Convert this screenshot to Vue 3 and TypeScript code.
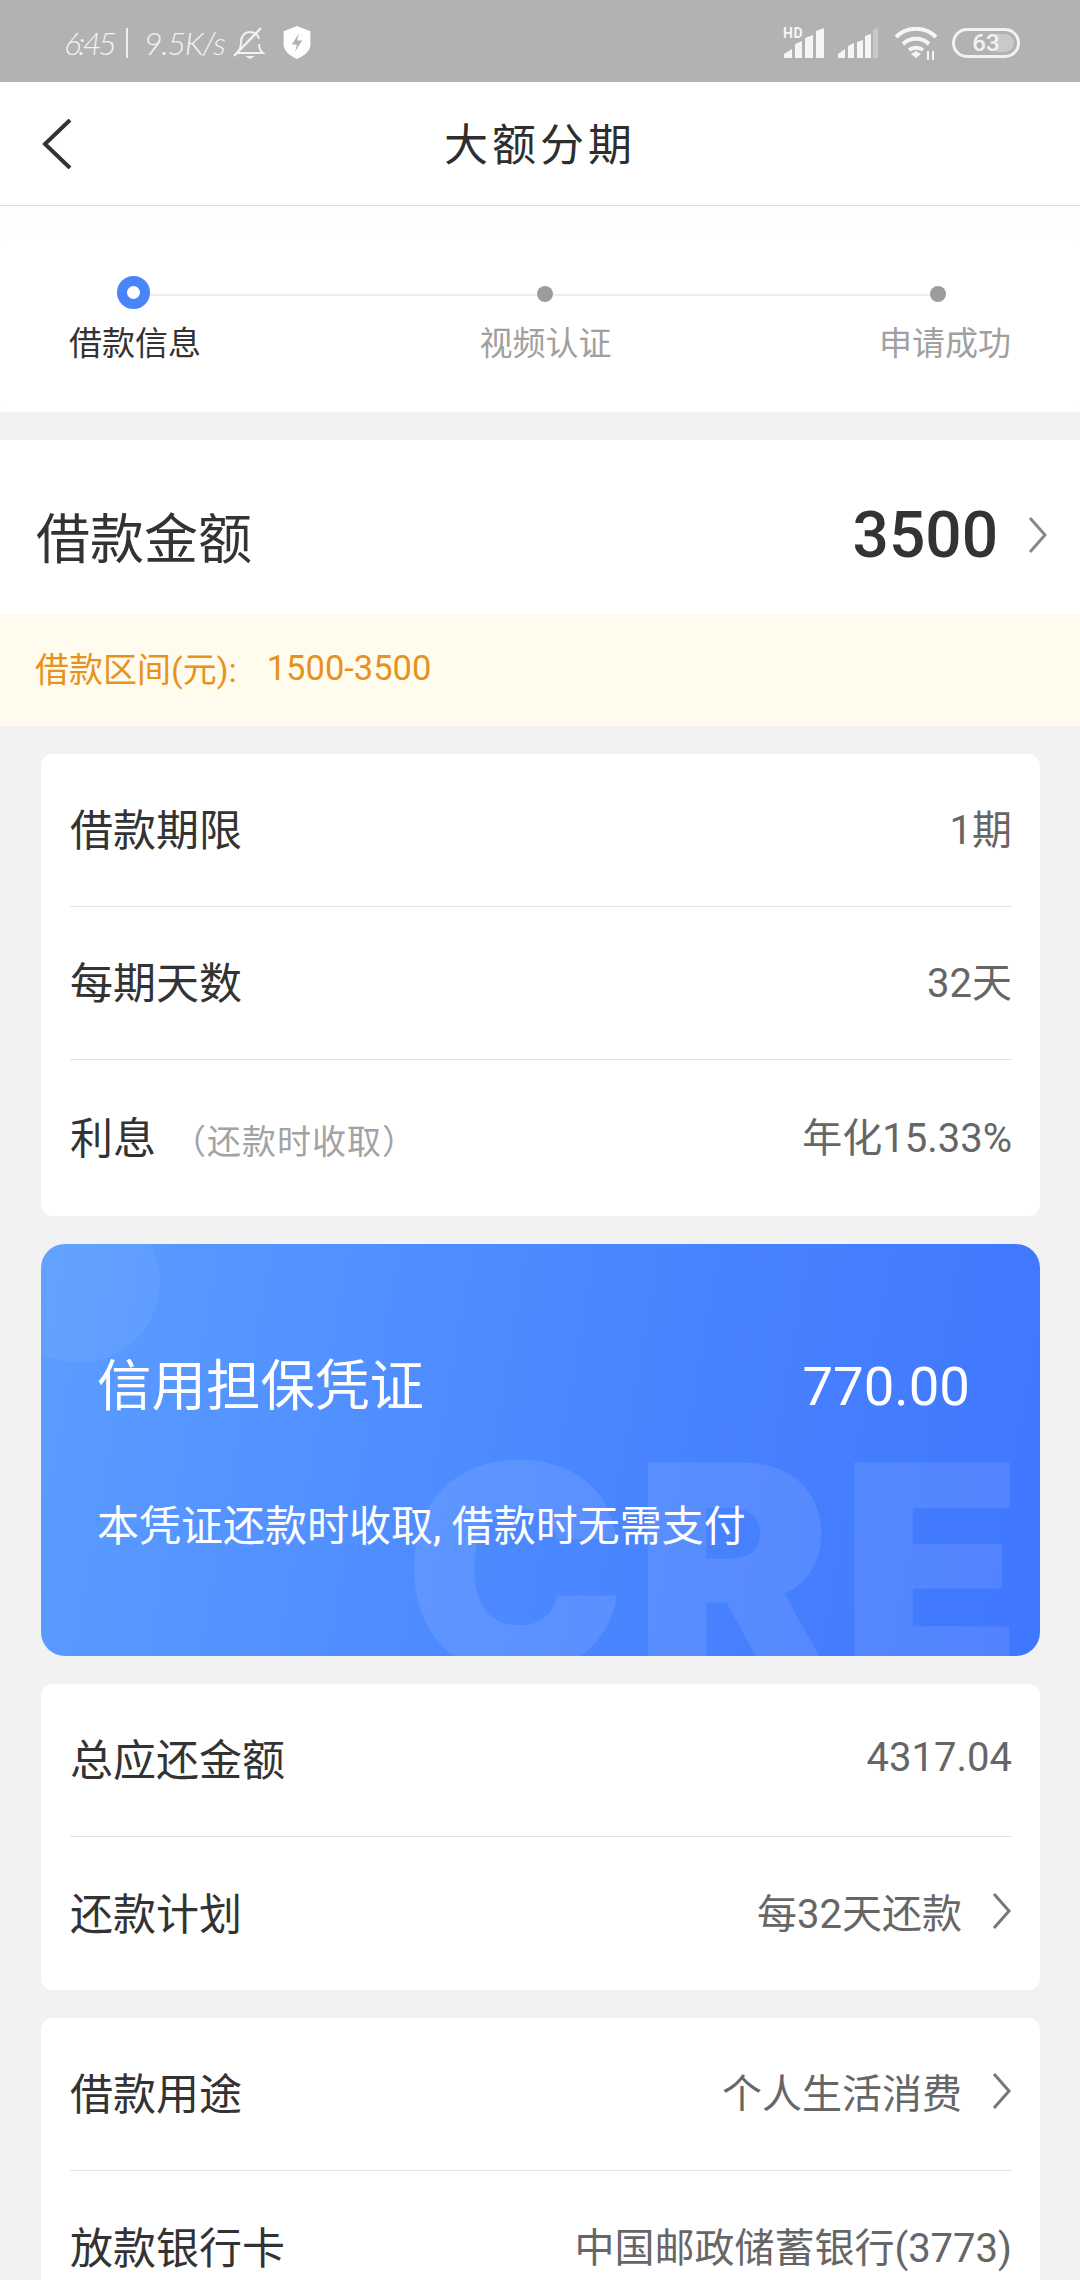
<template>
  <div class="page">
    <div class="status-bar">
      <span class="time">6:45</span>
      <span class="sep"></span>
      <span class="speed">9.5K/s</span>
      <svg class="bell" viewBox="0 0 32 34" fill="none" stroke="#f2f2f2" stroke-width="2">
        <path d="M4 27c3-3 4-6 4-11 0-6 4-10 9-10s8 3 9 7M26 18c0 4 1 7 4 9H4" />
        <path d="M1 30 28 2" stroke-width="2.4" />
        <path d="M12 30h10l-5 3z" fill="#f2f2f2" stroke="none" />
      </svg>
      <svg class="shield" viewBox="0 0 28 32">
        <path d="M14 0 27 5v13c0 6-6 11-13 14C7 29 1 24 1 18V5z" fill="#fff" />
        <path d="M16 7 9 18h5l-2 7 7-11h-5z" fill="#b2b2b2" />
      </svg>
      <div class="status-right">
        <div class="signal">
          <span class="hd">HD</span>
          <svg viewBox="0 0 40 30" class="bars">
            <path d="M0 30v-4l8-5v9zM11 30V16l7-3v17zM21 30V10l8-3v23zM32 30V3l8-3v30z" fill="#f5f5f5" />
          </svg>
        </div>
        <svg viewBox="0 0 40 30" class="bars second">
          <path d="M0 30v-4l7-5v9zM10 30V18l6-3v15zM19 30V14l6-2v18zM27 30V8l6-2v24z" fill="#f5f5f5" />
          <path d="M35 30V2l5-2v30z" fill="#c8c8c8" />
        </svg>
        <svg class="wifi" viewBox="0 0 44 34" fill="none" stroke="#f5f5f5" stroke-width="4">
          <path d="M2 10C13-1 31-1 42 10" />
          <path d="M9 17c7-7 19-7 26 0" />
          <path d="M15 23c4-3 10-3 14 0" />
          <path d="m17 27 5-3 5 3-5 4z" fill="#f5f5f5" stroke="none" />
          <path d="M34 24v9M39 24v9" stroke-width="2" />
        </svg>
        <div class="battery">
          <span class="battery-fill"></span>
          <span class="battery-num">63</span>
        </div>
      </div>
    </div>

    <header class="nav">
      <svg class="back" viewBox="0 0 30 50" fill="none" stroke="#333" stroke-width="4">
        <path d="M28 1 3 25l25 24" />
      </svg>
      <span class="nav-title">大额分期</span>
    </header>

    <div class="top-strip">
      <section class="steps">
        <div class="track">
          <span class="dot-active"></span>
          <span class="line first-line"></span>
          <span class="dot"></span>
          <span class="line"></span>
          <span class="dot"></span>
        </div>
        <div class="step-labels">
          <span v-for="(s, i) in steps" :key="s" :class="{ on: i === 0 }">{{ s }}</span>
        </div>
      </section>
    </div>

    <section class="amount">
      <span class="amount-label">借款金额</span>
      <span class="amount-value">3500</span>
      <svg class="chev amount-chev" viewBox="0 0 20 38" fill="none" stroke="#888" stroke-width="3">
        <path d="m2 2 15 17L2 36" />
      </svg>
    </section>
    <div class="notice">借款区间(元):<span class="notice-range">1500-3500</span></div>

    <div class="content">
      <div class="card">
        <div class="row">
          <span class="label">借款期限</span>
          <span class="value">1期</span>
        </div>
        <div class="row">
          <span class="label">每期天数</span>
          <span class="value">32天</span>
        </div>
        <div class="row last-row">
          <span class="label">利息<small>（还款时收取）</small></span>
          <span class="value">年化15.33%</span>
        </div>
      </div>

      <div class="credit">
        <span class="blob"></span>
        <span class="watermark">CRE</span>
        <div class="credit-head">
          <span>信用担保凭证</span>
          <span class="credit-num">770.00</span>
        </div>
        <p class="credit-note">本凭证还款时收取, 借款时无需支付</p>
      </div>

      <div class="card">
        <div class="row">
          <span class="label">总应还金额</span>
          <span class="value">4317.04</span>
        </div>
        <div class="row">
          <span class="label">还款计划</span>
          <span class="value">每32天还款</span>
          <svg class="chev" viewBox="0 0 20 38" fill="none" stroke="#777" stroke-width="3">
            <path d="m2 2 15 17L2 36" />
          </svg>
        </div>
      </div>

      <div class="card">
        <div class="row">
          <span class="label">借款用途</span>
          <span class="value">个人生活消费</span>
          <svg class="chev" viewBox="0 0 20 38" fill="none" stroke="#777" stroke-width="3">
            <path d="m2 2 15 17L2 36" />
          </svg>
        </div>
        <div class="row">
          <span class="label">放款银行卡</span>
          <span class="value">中国邮政储蓄银行(3773)</span>
        </div>
      </div>
    </div>
  </div>
</template>

<script setup lang="ts">
const steps: string[] = ['借款信息', '视频认证', '申请成功']
</script>

<style>
html,
body {
  margin: 0;
  background: #f2f2f2;
}
</style>

<style scoped>
.page {
  width: 1080px;
  height: 2280px;
  overflow: hidden;
  background: #f2f2f2;
  font-family: Roboto, "Noto Sans CJK SC", sans-serif;
  color: #333;
}

.status-bar {
  height: 82px;
  background: #b2b2b2;
  display: flex;
  align-items: center;
  padding: 3px 0 0 64px;
  box-sizing: border-box;
  color: #f2f2f2;
  font-family: Lato, sans-serif;
  font-style: italic;
  font-weight: 300;
  font-size: 32px;
}
.time {
  width: 46px;
  letter-spacing: -3px;
  white-space: nowrap;
}
.sep {
  width: 2px;
  height: 30px;
  background: #eee;
  margin: 0 16px 0 16px;
}
.speed {
  width: 78px;
  letter-spacing: -1.2px;
  white-space: nowrap;
}
.bell {
  width: 32px;
  height: 34px;
  margin-left: 11px;
}
.shield {
  width: 30px;
  height: 33px;
  margin-left: 17px;
}
.status-right {
  margin-left: auto;
  margin-right: 60px;
  display: flex;
  align-items: center;
}
.signal {
  position: relative;
}
.hd {
  position: absolute;
  left: -1px;
  top: -3px;
  font: 700 14px Roboto, sans-serif;
  letter-spacing: 0.5px;
  color: #f5f5f5;
}
.bars {
  display: block;
  width: 40px;
  height: 30px;
}
.second {
  margin-left: 14px;
}
.wifi {
  width: 44px;
  height: 34px;
  margin-left: 16px;
  margin-top: 2px;
}
.battery {
  position: relative;
  width: 68px;
  height: 30px;
  margin-left: 14px;
  border: 3px solid #f2f2f2;
  border-radius: 16px;
  box-sizing: border-box;
  display: flex;
  align-items: center;
  justify-content: center;
}
.battery-fill {
  position: absolute;
  right: 3px;
  top: 3px;
  bottom: 3px;
  width: 18px;
  border-radius: 0 10px 10px 0;
  background: #c9c9c9;
}
.battery-num {
  position: relative;
  font: 500 24px Roboto, sans-serif;
  color: #f2f2f2;
}

.nav {
  height: 124px;
  box-sizing: border-box;
  padding-bottom: 3px;
  background: #fff;
  border-bottom: 1px solid #dedede;
  display: flex;
  align-items: center;
  justify-content: center;
  position: relative;
}
.back {
  position: absolute;
  left: 42px;
  top: 37px;
  width: 30px;
  height: 50px;
}
.nav-title {
  font-family: "Noto Sans CJK SC", sans-serif;
  font-size: 44px;
  letter-spacing: 4px;
  color: #2e2e2e;
}

.top-strip {
  background: #fdfdfd;
  padding-top: 28px;
}
.steps {
  background: #fff;
  height: 178px;
  box-sizing: border-box;
  border-radius: 12px;
  padding-top: 42px;
}
.track {
  height: 33px;
  display: flex;
  align-items: center;
  padding: 0 134px 0 117px;
}
.dot-active {
  width: 33px;
  height: 33px;
  box-sizing: border-box;
  border: 10px solid #4a84fb;
  border-radius: 50%;
  background: #fff;
  flex: none;
}
.dot {
  width: 16px;
  height: 16px;
  border-radius: 50%;
  background: #9c9c9c;
  flex: none;
  margin-top: 3px;
}
.line {
  flex: 1;
  height: 2px;
  background: #eeeeee;
  margin-top: 5px;
}
.first-line {
  flex: none;
  width: 387px;
}
.step-labels {
  margin-top: 13px;
  padding: 0 69px 0 69px;
  display: flex;
  justify-content: space-between;
  font-size: 33px;
  line-height: 44px;
  color: #a0a0a0;
}
.step-labels span:nth-child(2) {
  margin-left: 11px;
}
.step-labels .on {
  color: #333;
}

.amount {
  margin-top: 28px;
  height: 174px;
  box-sizing: border-box;
  padding: 16px 32px 0 36px;
  background: #fff;
  display: flex;
  align-items: center;
}
.amount-label {
  font-size: 54px;
  color: #333;
}
.amount-value {
  margin-left: auto;
  font-size: 64px;
  font-weight: 500;
  color: #333;
}
.amount-chev {
  margin-left: 29px;
  width: 22px;
  height: 40px;
}
.notice {
  height: 112px;
  box-sizing: border-box;
  background: #fffcee;
  padding: 0 0 5px 35px;
  display: flex;
  align-items: center;
  font-size: 34px;
  color: #e8921e;
}
.notice-range {
  margin-left: 30px;
  font-size: 34.5px;
}

.content {
  padding: 28px 40px 0 41px;
  display: flex;
  flex-direction: column;
  gap: 28px;
}
.card {
  background: #fff;
  border-radius: 12px;
  padding: 0 28px 0 29px;
}
.row {
  height: 153px;
  padding-bottom: 6px;
  display: flex;
  align-items: center;
  border-bottom: 1px solid #e2e2e2;
  box-sizing: border-box;
}
.row:last-child {
  border-bottom: 0;
}
.last-row {
  height: 156px;
}
.label {
  font-size: 43px;
  color: #333;
}
.label small {
  margin-left: 16px;
  font-size: 34px;
  letter-spacing: 1px;
  color: #a3a3a3;
}
.value {
  margin-left: auto;
  font-size: 40px;
  color: #666;
}
.chev {
  width: 20px;
  height: 38px;
  margin-left: 30px;
  flex: none;
}

.credit {
  position: relative;
  height: 412px;
  box-sizing: border-box;
  overflow: hidden;
  border-radius: 24px;
  padding: 105px 70px 0 56px;
  background: linear-gradient(100deg, #5b9dff 0%, #4a86ff 55%, #3f76fe 100%);
  color: #fff;
}
.blob {
  position: absolute;
  left: -43px;
  top: -43px;
  width: 162px;
  height: 162px;
  border-radius: 50%;
  background: rgba(255, 255, 255, 0.05);
}
.watermark {
  position: absolute;
  left: 363px;
  top: 179px;
  font: 900 288px/1 Inter, sans-serif;
  letter-spacing: 8px;
  transform: scaleX(1.03);
  transform-origin: left;
  color: #fff;
  opacity: 0.09;
}
.credit-head {
  position: relative;
  display: flex;
  justify-content: space-between;
  align-items: center;
  font-size: 54.5px;
  line-height: 74px;
}
.credit-note {
  position: relative;
  margin: 74px 0 0;
  font-size: 42px;
  line-height: 60px;
}
</style>
